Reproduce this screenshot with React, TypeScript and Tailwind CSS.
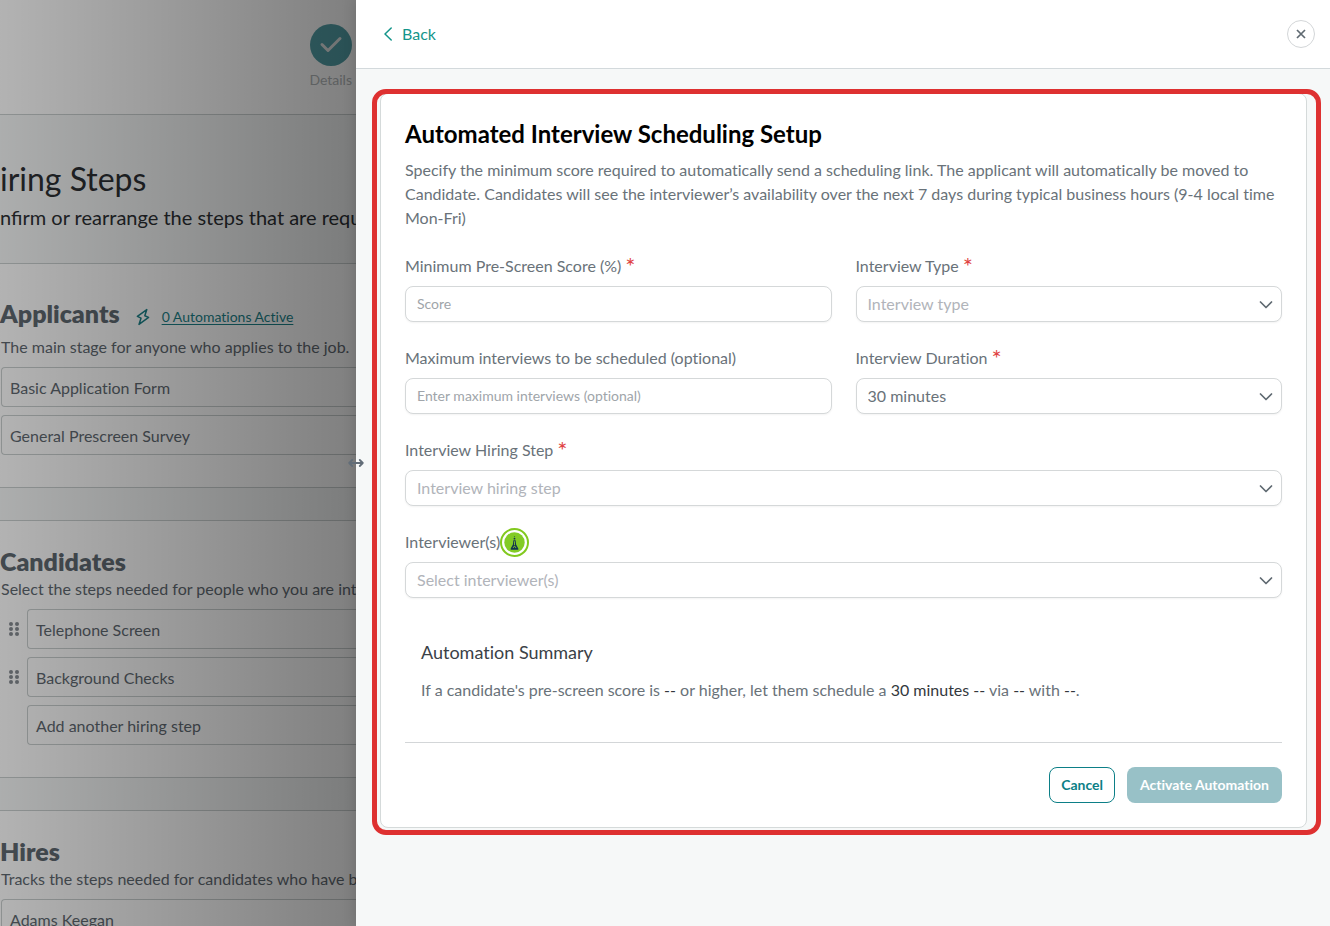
import type { ReactNode } from "react";

const steps = {
  applicants: ["Basic Application Form", "General Prescreen Survey"],
  candidates: [
    { name: "Telephone Screen", draggable: true },
    { name: "Background Checks", draggable: true },
    { name: "Add another hiring step", draggable: false },
  ],
};

function DragDots() {
  return (
    <svg width="10" height="14" viewBox="0 0 10 14" fill="#868c92" aria-hidden="true">
      {[2, 7, 12].map((y) => (
        <g key={y}>
          <circle cx="2" cy={y} r="2" />
          <circle cx="8" cy={y} r="2" />
        </g>
      ))}
    </svg>
  );
}

function StepBox({ children }: { children: ReactNode }) {
  return (
    <div className="flex h-10 flex-1 items-center rounded-l-sm border border-r-0 border-[#c9cfcf] px-2 pt-0.5 text-[#5f6971]">
      {children}
    </div>
  );
}

function HiringPage() {
  return (
    <main className="relative w-[356px] shrink-0 overflow-hidden whitespace-nowrap bg-[#f6f8f8]">
      <header className="flex h-[115px] justify-end border-b border-[#c9cfcf] bg-white pt-6">
        <div className="mr-1 flex flex-col items-center gap-1">
          <span className="flex size-[42px] items-center justify-center rounded-full bg-[#53a0a8]">
            <svg width="24" height="18" viewBox="0 0 24 18" fill="none" stroke="#dfe3e3" strokeWidth="3" strokeLinecap="round" strokeLinejoin="round" aria-hidden="true">
              <path d="M3 8.5 9 14.5 21 2.5" />
            </svg>
          </span>
          <span className="text-sm leading-5 text-[#b4b9bb]">Details</span>
        </div>
      </header>

      <section className="h-[148px] pt-11 text-[#2c2f33]">
        <h1 className="text-[32px] leading-10">iring Steps</h1>
        <p className="mt-1 text-xl leading-7 [font-variant-ligatures:common-ligatures]">nfirm or rearrange the steps that are required</p>
      </section>

      <section className="h-[225px] border-y border-[#c9cfcf] bg-white pt-[31px] text-[#5f6971]">
        <div className="flex h-9 items-center">
          <h2 className="text-[25px] leading-9 font-extrabold">Applicants</h2>
          <svg className="mt-2 ml-4" width="14" height="18" viewBox="0 0 14 18" fill="none" stroke="#1b8289" strokeWidth="1.5" strokeLinejoin="round" aria-hidden="true">
            <path d="M10.8 1.6 1.4 8.4 5 10.2 3 16.4 12.6 9.4 8.8 7.8Z" />
          </svg>
          <a href="#automations" className="mt-2 ml-3 text-sm leading-6 text-[#1b8289] underline underline-offset-2">
            0 Automations Active
          </a>
        </div>
        <p className="mt-1 pl-px leading-6">The main stage for anyone who applies to the job.</p>
        <div className="mt-2 ml-px flex flex-col gap-2">
          {steps.applicants.map((name) => (
            <div key={name} className="flex">
              <StepBox>{name}</StepBox>
            </div>
          ))}
        </div>
      </section>

      <section className="mt-8 h-[258px] border-y border-[#c9cfcf] bg-white pt-6 text-[#5f6971]">
        <h2 className="text-[25px] leading-8 font-extrabold">Candidates</h2>
        <p className="pl-px leading-6">Select the steps needed for people who you are interviewing</p>
        <div className="mt-2 flex flex-col gap-2">
          {steps.candidates.map((step) => (
            <div key={step.name} className="flex items-center">
              <span className="w-[27px] pl-[9px]">{step.draggable && <DragDots />}</span>
              <StepBox>{step.name}</StepBox>
            </div>
          ))}
        </div>
      </section>

      <section className="mt-8 border-y border-[#c9cfcf] bg-white pt-6 pb-8 text-[#5f6971]">
        <h2 className="text-[25px] leading-8 font-extrabold">Hires</h2>
        <p className="pl-px leading-6">Tracks the steps needed for candidates who have been</p>
        <div className="mt-2 ml-px flex">
          <StepBox>Adams Keegan</StepBox>
        </div>
      </section>

      <div className="absolute inset-0 bg-linear-to-r from-black/30 to-black/50" />
    </main>
  );
}

function Label({ htmlFor, required, children }: { htmlFor: string; required?: boolean; children: ReactNode }) {
  return (
    <label htmlFor={htmlFor} className="flex h-6 items-center gap-1 leading-6 text-[#697279]">
      {children}
      {required && <span className="text-2xl leading-6 text-[#e04343]">*</span>}
    </label>
  );
}

function TextField({ id, label, placeholder, required }: { id: string; label: string; placeholder: string; required?: boolean }) {
  return (
    <div className="flex flex-col gap-2">
      <Label htmlFor={id} required={required}>{label}</Label>
      <input
        id={id}
        type="text"
        placeholder={placeholder}
        className="h-9 w-full rounded-lg border border-[#d5d8d9] bg-white px-[11px] pb-0.5 text-sm text-[#697279] shadow-xs outline-none placeholder:text-[#a0a5aa]"
      />
    </div>
  );
}

type SelectProps = { id: string; label: string; value: string; filled?: boolean; required?: boolean; badge?: ReactNode };

function SelectField({ id, label, value, filled, required, badge }: SelectProps) {
  return (
    <div className="flex flex-col gap-2">
      <div className="relative flex w-fit">
        <Label htmlFor={id} required={required}>{label}</Label>
        {badge}
      </div>
      <div className="relative">
        <select
          id={id}
          defaultValue={value}
          className={
            "h-9 w-full appearance-none rounded-lg border border-[#d5d8d9] bg-white px-[11px] text-base shadow-xs outline-none " +
            (filled ? "text-[#697279]" : "text-[#b1b4ba]")
          }
        >
          <option>{value}</option>
        </select>
        <svg className="pointer-events-none absolute top-[14px] right-[9px]" width="14" height="9" viewBox="0 0 14 9" fill="none" stroke="#5f6971" strokeWidth="1.7" strokeLinecap="round" strokeLinejoin="round" aria-hidden="true">
          <path d="M1.5 2 7 7.5 12.5 2" />
        </svg>
      </div>
    </div>
  );
}

function GuideBadge() {
  return (
    <button
      type="button"
      aria-label="Open guide"
      className="absolute -top-0.5 -right-[29px] flex size-[29px] items-center justify-center rounded-full border-2 border-[#82c91e] bg-white"
    >
      <svg width="21" height="21" viewBox="0 0 21 21" aria-hidden="true">
        <circle cx="10.5" cy="10.5" r="10.2" fill="#82cb25" />
        <path d="M9.4 8.2h2.2l.5 4.2 2.2 4.2v1.1H6.7v-1.1l2.2-4.2z" fill="#12344f" />
        <path d="M10.5 9.3v4M9 16l1.5-2 1.5 2" fill="none" stroke="#82cb25" strokeWidth=".9" />
        <circle cx="10.5" cy="6.7" r=".9" fill="#12344f" />
        <circle cx="10.5" cy="4.6" r=".7" fill="#3b7a35" />
      </svg>
    </button>
  );
}

function Drawer() {
  return (
    <aside className="relative flex min-w-0 flex-1 flex-col bg-[#f6f8f8] shadow-[0_0_12px_rgba(0,0,0,0.15)]">
      <header className="flex h-[69px] shrink-0 items-center justify-between border-b border-[#d3d9dc] bg-white pr-[15px] pl-7">
        <button type="button" className="flex items-center gap-[10px] text-base leading-6 text-[#14958a]">
          <svg width="8" height="14" viewBox="0 0 8 14" fill="none" stroke="currentColor" strokeWidth="1.5" strokeLinecap="round" strokeLinejoin="round" aria-hidden="true">
            <path d="M7.2 1 1 7 7.2 13" />
          </svg>
          Back
        </button>
        <button type="button" aria-label="Close" className="flex size-7 items-center justify-center rounded-full border border-[#d3d6d8]">
          <svg width="10" height="10" viewBox="0 0 10 10" fill="none" stroke="#5f6971" strokeWidth="1.7" aria-hidden="true">
            <path d="M1 1 9 9M9 1 1 9" />
          </svg>
        </button>
      </header>

      <div className="pt-6 pr-[23px] pl-6">
        <form className="relative rounded-lg border border-[#d5dada] bg-white p-6" onSubmit={(e) => e.preventDefault()}>
          <div className="pointer-events-none absolute -top-[5px] -right-[15px] -bottom-2 -left-[9px] rounded-[14px] border-5 border-[#de3131]" />

          <h2 className="text-2xl leading-8 font-bold text-black">Automated Interview Scheduling Setup</h2>
          <p className="mt-2 leading-6 text-[#697279]">
            Specify the minimum score required to automatically send a scheduling link. The applicant will automatically be moved to
            Candidate. Candidates will see the interviewer’s availability over the next 7 days during typical business hours (9-4 local
            time Mon-Fri)
          </p>

          <div className="mt-6 grid grid-cols-2 gap-6">
            <TextField id="score" label="Minimum Pre-Screen Score (%)" placeholder="Score" required />
            <SelectField id="type" label="Interview Type" value="Interview type" required />
            <TextField id="maximum" label="Maximum interviews to be scheduled (optional)" placeholder="Enter maximum interviews (optional)" />
            <SelectField id="duration" label="Interview Duration" value="30 minutes" filled required />
            <div className="col-span-2">
              <SelectField id="step" label="Interview Hiring Step" value="Interview hiring step" required />
            </div>
            <div className="col-span-2">
              <SelectField id="interviewers" label="Interviewer(s)" value="Select interviewer(s)" badge={<GuideBadge />} />
            </div>
          </div>

          <section className="mt-6 p-4">
            <h3 className="text-lg leading-7 text-[#3b4147]">Automation Summary</h3>
            <p className="mt-3 leading-6 text-[#697279]">
              If a candidate's pre-screen score is <span className="text-[#33383d]">--</span> or higher, let them schedule a{" "}
              <span className="text-[#33383d]">30 minutes</span> <span className="text-[#33383d]">--</span> via{" "}
              <span className="text-[#33383d]">--</span> with <span className="text-[#33383d]">--</span>.
            </p>
          </section>

          <footer className="mt-6 flex justify-end gap-3 border-t border-[#d3d6d8] pt-6">
            <button type="button" className="h-9 rounded-lg border border-[#0c7f87] px-[11px] text-sm font-bold text-[#0c7f87]">
              Cancel
            </button>
            <button type="submit" disabled className="h-9 rounded-lg bg-[#98c1c7] px-[13px] text-sm font-bold text-white">
              Activate Automation
            </button>
          </footer>
        </form>
      </div>

      <div className="absolute top-1/2 -left-2 z-10 -translate-y-1/2 cursor-ew-resize">
        <svg width="16" height="10" viewBox="0 0 16 10" fill="none" stroke="#626d78" strokeWidth="1.8" strokeLinecap="round" strokeLinejoin="round" aria-hidden="true">
          <path d="M1.2 5H14.8M4.2 2 1.2 5 4.2 8M11.8 2l3 3-3 3" />
        </svg>
      </div>
    </aside>
  );
}

export default function App() {
  return (
    <div className="flex h-screen overflow-hidden font-['Lato',sans-serif] [font-variant-ligatures:none]">
      <HiringPage />
      <Drawer />
    </div>
  );
}
